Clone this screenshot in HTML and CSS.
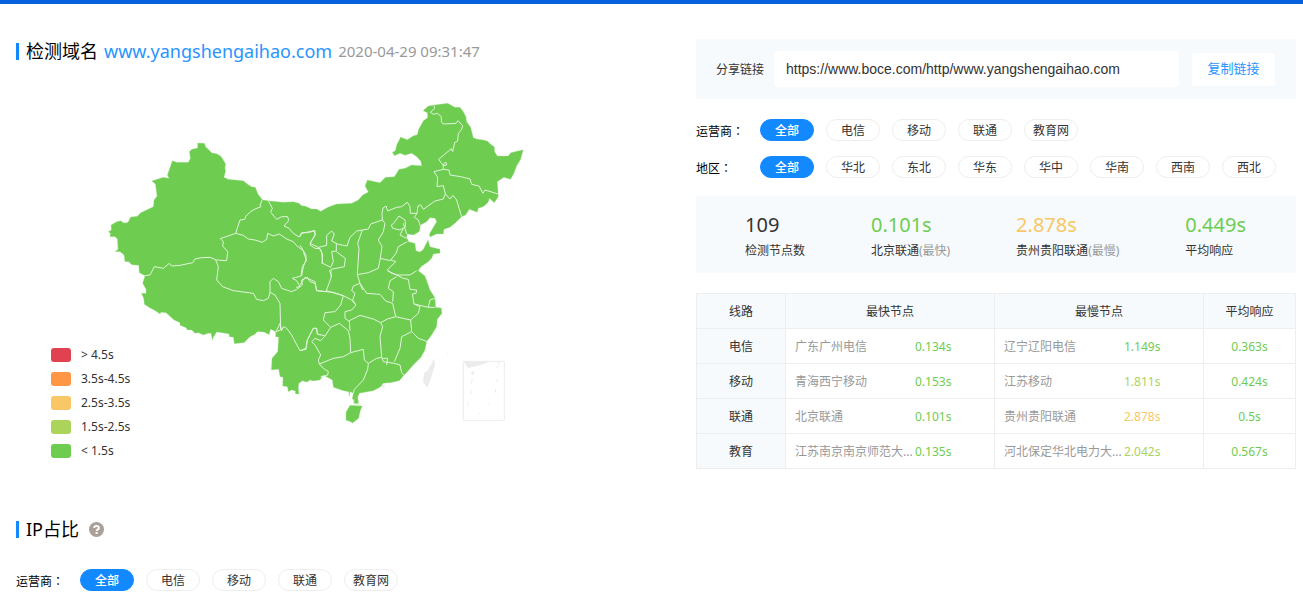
FILE: index.html
```html
<!DOCTYPE html>
<html lang="zh-CN">
<head>
<meta charset="utf-8">
<meta name="viewport" content="width=device-width, initial-scale=1">
<title>检测域名 www.yangshengaihao.com</title>
<link rel="stylesheet" href="styles.css">
</head>
<body>
<div class="topbar"></div>
<main class="page">
  <div class="overview">
    <section class="overview-map">
      <h1 class="title">检测域名 <a class="domain" href="#">www.yangshengaihao.com</a> <time class="time">2020-04-29 09:31:47</time></h1>
      <div class="map-box">
        <svg class="map" viewBox="0 0 1290 1050" role="img" aria-label="全国响应时间分布">
          <path class="land" d="M293 159L313 160L318 172L325 178L335 188L350 191L363 199L370 210L377 222L375 235L377 243L372 262L385 268L430 272L445 284L455 290L466 292L474 312L487 329L505 332L550 337L580 335L597 340L605 347L615 348L635 357L650 357L662 364L685 351L710 342L755 340L775 330L788 315L805 306L795 288L802 270L840 278L856 262L883 260L897 238L915 235L935 225L965 227L962 213L950 200L935 190L915 196L900 190L883 197L877 187L886 182L890 165L902 141L922 149L940 137L952 134L955 120L970 92L983 83L982 68L969 62L985 48L1002 45L1043 40L1065 52L1080 52L1090 65L1098 80L1100 95L1112 112L1120 143L1130 147L1150 150L1162 153L1172 163L1183 170L1184 185L1192 198L1225 198L1232 188L1250 184L1270 179L1262 208L1250 228L1242 250L1232 268L1212 262L1192 275L1195 320L1183 338L1168 325L1165 337L1150 350L1135 355L1132 367L1108 358L1097 375L1085 380L1065 400L1050 412L1032 418L1030 432L1010 432L990 441L988 432L1000 412L1010 395L1005 385L990 383L980 395L962 405L958 425L940 435L922 432L920 442L926 455L945 460L948 482L960 486L970 478L978 462L984 450L990 470L1020 478L1020 490L1000 492L996 503L985 515L963 530L955 542L975 558L985 585L990 600L1005 623L1007 652L1024 654L1026 670L1012 688L1010 710L995 735L980 755L975 780L963 802L940 825L925 842L912 856L898 872L872 878L850 880L845 887L840 892L820 902L778 910L773 922L776 940L764 942L757 925L760 910L750 905L748 920L746 905L730 902L700 892L697 870L675 858L668 858L660 870L640 873L630 870L622 876L615 875L608 872L597 880L595 892L597 912L586 912L586 903L575 900L565 905L562 890L548 888L549 862L540 860L536 838L514 840L516 805L533 785L536 742L527 740L527 725L512 718L507 734L492 726L472 725L465 733L450 740L432 758L403 761L400 742L388 740L387 732L370 729L350 726L340 742L337 751L333 730L325 730L310 735L295 728L285 730L275 720L262 720L258 713L240 706L240 698L222 690L198 668L183 667L180 672L166 662L150 654L133 643L131 625L124 610L138 610L138 598L128 580L135 557L118 548L116 526L95 524L86 515L75 515L72 495L60 485L45 485L54 478L52 447L45 440L30 440L31 430L25 425L34 420L33 405L50 395L62 392L72 399L84 397L92 381L112 379L122 368L160 350L162 330L171 318L166 282L155 273L190 262L207 265L202 255L217 212L230 217L265 217L271 205L268 185L275 178L293 174Z"/>
          <path class="land" d="M750 946L787 948L781 962L776 985L758 999L748 994L738 991L738 966Z"/>
          <g class="borders">
            <path d="M487 329L480 345L483 350L465 357L452 365L438 378L434 388L420 390L407 430L361 446L370 455L368 468L383 485L380 512L350 510L330 502L305 503L285 507L278 518L240 526L215 528L208 520L190 535L163 530L150 555L135 557"/>
            <path d="M505 332L517 355L512 367L530 388L545 380L563 380L566 392L552 408L567 415L580 430L597 441L605 428L625 428L645 422L645 435L633 455L630 465L645 475L660 476L668 495L666 522"/>
            <path d="M407 430L430 436L445 447L465 450L487 457L500 448L503 430L520 438L538 432L560 447L580 455L590 467L610 482L613 495L620 510L607 530L603 558L577 565L590 572L600 590L588 592"/>
            <path d="M347 510L355 530L350 570L368 590L400 602L460 610L470 628L490 632L505 625L510 607L510 575L520 565L535 575L545 595L575 605L590 598L607 585L605 570L622 562L630 575L645 580L650 603"/>
            <path d="M510 607L525 615L540 640L542 720L528 725L540 700L545 722L550 710L560 715L575 735L580 745L600 782L618 778L622 750L640 715L650 715L652 732L662 735"/>
          </g>
          <g class="borders" transform="translate(600 0)">
            <path d="M402 46L404 55L391 67L400 73L412 70L424 80L424 95L430 102L468 100L474 92L488 107L485 118L475 130L473 153L464 158L458 185L454 176L416 208L430 227L440 225L438 217L430 222L430 238L402 245L413 262L411 290L430 287L436 312L430 327L405 333L370 358L362 344L354 348L351 370L331 370L330 350L322 337L305 350L290 352L263 363L258 348L249 354L246 370L247 390L212 402L205 417L170 423L150 442L141 468L115 463L95 453L103 432L95 423L80 436L80 466L55 472L30 460L46 435L42 422L5 430L0 440"/>
            <path d="M430 238L447 240L450 255L482 260L510 267L515 283L537 288L549 310L555 300L595 312"/>
            <path d="M436 312L450 327L459 316L470 330L477 355L485 380M351 370L343 382L355 390L362 410"/>
            <path d="M280 401L297 378L315 390L317 410L300 420L278 415L274 405L280 401M310 400L320 432M310 415L300 435L320 445"/>
            <path d="M247 390L255 400L250 425L235 450L246 470L240 510L235 535L205 548L172 554M187 420L173 460L177 475L172 554L180 580L188 600"/>
            <path d="M322 455L295 470L288 490L272 510L287 515L262 540L275 550L293 555M240 505L272 512M55 472L65 485L68 520L92 532L100 515L95 485L109 483L109 460M109 485L136 505L133 530L93 538L93 560M0 466L18 495L18 510L10 530L5 558"/>
          </g>
          <g class="borders" transform="translate(600 480)">
            <path d="M0 105L15 82L45 95L50 122L78 125L95 78L88 60M50 122L100 127L130 137L155 150L168 165L155 180L135 185L135 205L148 215"/>
            <path d="M78 122L130 137L122 165L105 185L75 188L70 210L92 232L118 220L145 242L150 265L152 308"/>
            <path d="M180 100L160 108L155 122L165 130L158 150L168 165M180 100L200 130L240 133L257 153L278 160L287 200M287 200L262 207L242 218L220 207L180 196L148 212L150 242"/>
            <path d="M262 62L290 75L330 75L350 62M290 75L310 85L325 88L330 118L350 120L348 130L337 132L342 162L360 170L355 190L332 210L287 200M290 80L270 92L265 115L280 125L278 155"/>
            <path d="M342 162L385 172L405 172M385 172L390 150L405 145M332 210L335 245L305 260L300 295L283 335M335 245L355 265L382 275"/>
            <path d="M242 218L248 230L240 260L245 322L230 325L205 340L193 330L190 298L152 308L130 320L100 325L58 342L55 330L62 315L45 285L35 275L45 265L62 272L75 258L92 232"/>
            <path d="M0 302L18 295L22 270L40 235L50 235L52 252L65 255L75 258"/>
            <path d="M58 342L70 355L85 365L83 375L62 380M205 340L203 358L190 390L163 418L160 430M245 322L250 335L283 340L300 345L305 368L312 376M260 345L263 325L248 325M162 448L160 462L185 464"/>
          </g>
          <g class="islands">
            <path d="M1003 805L984 840L972 850L969 876L982 893L991 869L1005 825Z"/>
            <path d="M1090 814H1172L1140 826L1104 834ZM1112 850L1120 842L1124 848L1118 856ZM1192 818L1200 814L1197 822Z"/>
            <path class="dash" d="M1117 869L1114 880M1116 902L1112 912M1103 937L1104 945M1136 971L1142 968M1163 947L1169 941M1186 908L1187 898M1190 876L1193 867M1190 834L1196 826M1041 790H1044"/>
            <path class="frame" d="M1090 814H1213V991H1090Z"/>
            <circle cx="850" cy="887" r="5"/>
          </g>
        </svg>
        <ul class="legend">
          <li class="legend-item"><i class="swatch swatch-red"></i>&gt; 4.5s</li>
          <li class="legend-item"><i class="swatch swatch-orange"></i>3.5s-4.5s</li>
          <li class="legend-item"><i class="swatch swatch-yellow"></i>2.5s-3.5s</li>
          <li class="legend-item"><i class="swatch swatch-lime"></i>1.5s-2.5s</li>
          <li class="legend-item"><i class="swatch swatch-green"></i>&lt; 1.5s</li>
        </ul>
      </div>
    </section>

    <section class="overview-data">
      <div class="share">
        <label class="share-label" for="share-url">分享链接</label>
        <input class="share-input" id="share-url" type="text" readonly value="https://www.boce.com/http/www.yangshengaihao.com">
        <button class="share-button" type="button">复制链接</button>
      </div>
      <div class="filters">
        <div class="filter" role="group" aria-labelledby="isp-label">
          <span class="filter-label" id="isp-label">运营商<span class="colon" lang="zh-TW">：</span></span>
          <button class="chip chip-active" type="button">全部</button>
          <button class="chip" type="button">电信</button>
          <button class="chip" type="button">移动</button>
          <button class="chip" type="button">联通</button>
          <button class="chip" type="button">教育网</button>
        </div>
        <div class="filter" role="group" aria-labelledby="area-label">
          <span class="filter-label" id="area-label">地区<span class="colon" lang="zh-TW">：</span></span>
          <button class="chip chip-active" type="button">全部</button>
          <button class="chip" type="button">华北</button>
          <button class="chip" type="button">东北</button>
          <button class="chip" type="button">华东</button>
          <button class="chip" type="button">华中</button>
          <button class="chip" type="button">华南</button>
          <button class="chip" type="button">西南</button>
          <button class="chip" type="button">西北</button>
        </div>
      </div>
      <div class="stats">
        <div class="stat"><strong class="stat-value">109</strong><span>检测节点数</span></div>
        <div class="stat"><strong class="stat-value green">0.101s</strong><span>北京联通<em class="muted">(最快)</em></span></div>
        <div class="stat"><strong class="stat-value yellow">2.878s</strong><span>贵州贵阳联通<em class="muted">(最慢)</em></span></div>
        <div class="stat"><strong class="stat-value green">0.449s</strong><span>平均响应</span></div>
      </div>
      <table class="lines">
        <colgroup><col class="col-line"><col class="col-node"><col class="col-node"><col class="col-avg"></colgroup>
        <thead>
          <tr><th scope="col">线路</th><th scope="col">最快节点</th><th scope="col">最慢节点</th><th scope="col">平均响应</th></tr>
        </thead>
        <tbody>
          <tr><th scope="row">电信</th><td><div class="node"><span class="node-name">广东广州电信</span><span class="green">0.134s</span></div></td><td><div class="node"><span class="node-name">辽宁辽阳电信</span><span class="green">1.149s</span></div></td><td class="avg">0.363s</td></tr>
          <tr><th scope="row">移动</th><td><div class="node"><span class="node-name">青海西宁移动</span><span class="green">0.153s</span></div></td><td><div class="node"><span class="node-name">江苏移动</span><span class="lime">1.811s</span></div></td><td class="avg">0.424s</td></tr>
          <tr><th scope="row">联通</th><td><div class="node"><span class="node-name">北京联通</span><span class="green">0.101s</span></div></td><td><div class="node"><span class="node-name">贵州贵阳联通</span><span class="yellow">2.878s</span></div></td><td class="avg">0.5s</td></tr>
          <tr><th scope="row">教育</th><td><div class="node"><span class="node-name">江苏南京南京师范大...</span><span class="green">0.135s</span></div></td><td><div class="node"><span class="node-name">河北保定华北电力大...</span><span class="lime">2.042s</span></div></td><td class="avg">0.567s</td></tr>
        </tbody>
      </table>
    </section>
  </div>

  <section class="ip">
    <h2 class="title">IP占比
      <button class="help" type="button" aria-label="说明">
        <svg class="help-icon" viewBox="0 0 15 15"><circle cx="7.5" cy="7.5" r="7.5" fill="#a8a099"/><path d="M5.2 6.1C5.2 3.2 9.9 3.2 9.9 5.9C9.9 7.4 7.6 7.4 7.6 9.1" fill="none" stroke="#fff" stroke-width="1.9"/><rect x="6.6" y="10" width="2" height="2" fill="#fff"/></svg>
      </button>
    </h2>
    <div class="filter" role="group" aria-labelledby="ip-isp-label">
      <span class="filter-label" id="ip-isp-label">运营商<span class="colon" lang="zh-TW">：</span></span>
      <button class="chip chip-active" type="button">全部</button>
      <button class="chip" type="button">电信</button>
      <button class="chip" type="button">移动</button>
      <button class="chip" type="button">联通</button>
      <button class="chip" type="button">教育网</button>
    </div>
  </section>
</main>
</body>
</html>
```

FILE: styles.css
```css
* {
  box-sizing: border-box;
}

body {
  margin: 0;
  background: #fff;
  color: #333;
  font: 12px/18px "Noto Sans", "Noto Sans CJK SC", sans-serif;
}

button,
input {
  margin: 0;
  border: 0;
  font: inherit;
}

button {
  padding: 0;
  cursor: pointer;
}

.topbar {
  height: 4px;
  background: #0562dc;
}

.page {
  padding: 35px 7px 16px 16px;
}

.overview {
  display: grid;
  grid-template-columns: minmax(0, 1fr) minmax(0, 600px);
}

.title {
  display: flex;
  align-items: center;
  gap: 6px;
  margin: 0;
  color: #000;
  font-size: 18px;
  font-weight: 400;
  line-height: 24px;
}

.title::before {
  content: "";
  width: 3px;
  height: 17px;
  margin-right: 1px;
  background: #1389ff;
}

.domain {
  color: #2a94ff;
  text-decoration: none;
}

.time {
  color: #999;
  font-size: 15px;
}

/* Map */
.map-box {
  position: relative;
  margin-top: 27px;
  padding-left: 84px;
}

.map {
  display: block;
  width: 430px;
  max-width: 100%;
}

.land {
  fill: #6ecd51;
  stroke: #b7e6a8;
  stroke-width: 1;
}

.borders {
  fill: none;
  stroke: #e1f4db;
  stroke-width: 3;
  stroke-linejoin: round;
}

.islands {
  fill: #ececec;
}

.islands .dash,
.islands .frame {
  fill: none;
  stroke: #ececec;
  stroke-width: 3;
}

.legend {
  position: absolute;
  left: 35px;
  top: 256px;
  display: grid;
  gap: 6px;
  margin: 0;
  padding: 0;
  list-style: none;
}

.legend-item {
  display: flex;
  align-items: center;
  gap: 10px;
}

.swatch {
  width: 20px;
  height: 14px;
  border-radius: 3px;
}

.swatch-red { background: #e0434f; }
.swatch-orange { background: #ff9645; }
.swatch-yellow { background: #f9c766; }
.swatch-lime { background: #acd35a; }
.swatch-green { background: #6ecd51; }

/* Share link */
.share {
  display: flex;
  align-items: center;
  height: 60px;
  padding: 0 21px 0 20px;
  background: #f6fafd;
}

.share-label {
  margin-right: 10px;
  padding-top: 2px;
}

.share-input {
  flex: 1;
  min-width: 0;
  height: 36px;
  margin-right: 13px;
  padding: 0 12px;
  border-radius: 4px;
  background: #fff;
  color: #333;
  font: 14px "Liberation Sans", sans-serif;
}

.share-button {
  width: 83px;
  height: 33px;
  padding-bottom: 2px;
  border-radius: 3px;
  background: #fff;
  color: #2a94ff;
  font-size: 13px;
}

/* Filters */
.filters {
  display: grid;
  gap: 15px;
  padding: 20px 0 18px;
}

.filter {
  display: flex;
  align-items: center;
  gap: 12px;
}

.filter-label {
  width: 52px;
  padding-top: 2px;
  color: #000;
  white-space: nowrap;
}

.colon {
  font-family: "Noto Sans CJK TC", sans-serif;
}

.chip {
  width: 54px;
  height: 22px;
  padding-top: 2px;
  border: 1px solid #eee;
  border-radius: 11px;
  background: #fff;
  color: #333;
  line-height: 18px;
}

.chip-active {
  border-color: #1389ff;
  background: #1389ff;
  color: #fff;
  font-weight: 500;
}

/* Summary */
.stats {
  display: flex;
  justify-content: space-between;
  margin-bottom: 20px;
  padding: 16px 50px 13px 49px;
  background: #f6fafd;
}

.stat {
  display: grid;
  gap: 4px;
}

.stat-value {
  font-size: 20px;
  font-weight: 400;
  line-height: 26px;
}

.muted {
  color: #999;
  font-style: normal;
}

.green { color: #6ecd51; }
.lime { color: #acd35a; }
.yellow { color: #f9c766; }

/* Lines table */
.lines {
  width: 100%;
  border-collapse: collapse;
  table-layout: fixed;
}

.col-line {
  width: 89px;
}

.col-avg {
  width: 92px;
}

.lines th,
.lines td {
  height: 35px;
  padding: 2px 9px 0;
  border: 1px solid #eee;
  font-weight: 400;
  text-align: center;
}

.lines th {
  background: #f6fafd;
}

.node {
  display: flex;
}

.node-name {
  width: 120px;
  color: #999;
  text-align: left;
  white-space: nowrap;
}

.lines .avg {
  color: #6ecd51;
}

/* IP share */
.ip {
  display: grid;
  gap: 28px;
  margin-top: 48px;
}

.help {
  width: 15px;
  height: 15px;
  margin-left: 4px;
  background: none;
}

.help-icon {
  display: block;
}
```
